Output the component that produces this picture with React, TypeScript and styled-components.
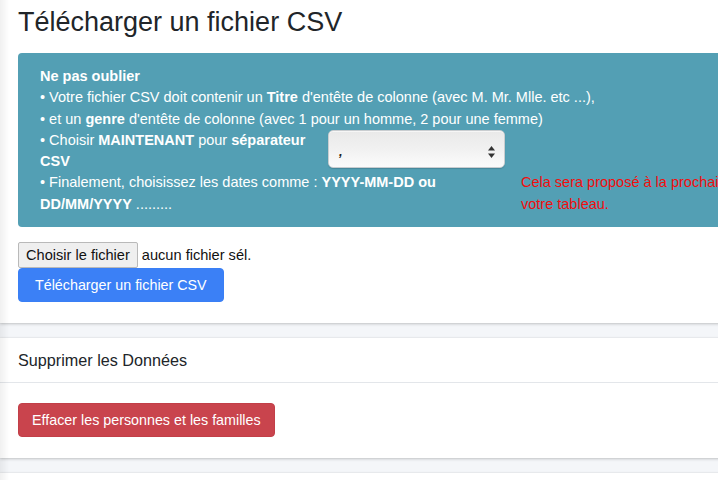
import React from "react";
import styled, { createGlobalStyle } from "styled-components";

const GlobalStyle = createGlobalStyle`
  html, body {
    margin: 0;
    padding: 0;
    background: #f4f6f9;
    overflow: hidden;
  }
  body {
    font-family: "Liberation Sans", Arial, Helvetica, sans-serif;
    color: #212529;
  }
  * { box-sizing: border-box; }
`;

const Page = styled.div`
  width: 780px;
  display: flex;
  flex-direction: column;
  gap: 15px;
`;

const SidebarShadow = styled.div`
  position: fixed;
  left: 0;
  top: 0;
  bottom: 0;
  width: 9px;
  background: linear-gradient(to right, rgba(0, 0, 0, 0.06), rgba(0, 0, 0, 0));
  pointer-events: none;
`;

const Card = styled.section`
  background: #fff;
  box-shadow: 0 0 1px rgba(0, 0, 0, 0.125), 0 1px 3px rgba(0, 0, 0, 0.2);
`;

const CardBody = styled.div<{ $top: number; $bottom: number }>`
  padding: ${(p) => p.$top}px 18px ${(p) => p.$bottom}px 18px;
  display: flex;
  flex-direction: column;
  align-items: flex-start;
`;

const CardHeader = styled.div`
  padding: 11px 18px 10px;
  font-size: 16.2px;
  line-height: 23px;
  border-bottom: 1px solid #e3e6ea;
`;

const Title = styled.h1`
  margin: 0 0 15px 0;
  font-size: 27px;
  line-height: 32px;
  font-weight: 400;
  color: #212529;
`;

const Alert = styled.div`
  align-self: stretch;
  background: #539fb4;
  color: #fff;
  border-radius: 4px;
  padding: 13px 20px 12px 22px;
  font-size: 14.5px;
  line-height: 21.3px;
`;

const Line = styled.div``;

const Strong = styled.b`
  font-weight: 700;
`;

const SplitRow = styled.div<{ $left: number; $gap: number }>`
  display: grid;
  grid-template-columns: ${(p) => p.$left}px auto;
  column-gap: ${(p) => p.$gap}px;
  align-items: start;
`;

const SelectBox = styled.div`
  width: 177px;
  height: 38px;
  border-radius: 5px;
  border: 1px solid #c9cdd0;
  background: linear-gradient(to bottom, #e9e9e9 0%, #f1f1f1 50%, #fbfbfb 100%);
  box-shadow: 0 1px 1px rgba(0, 0, 0, 0.15), inset 0 1px 0 rgba(255, 255, 255, 0.6);
  display: flex;
  align-items: center;
  justify-content: space-between;
  padding: 6px 8px 0 10px;
  color: #222;
  font-size: 13px;
`;

const SelectValue = styled.span`
  font-weight: 700;
  font-style: italic;
`;

const RedNote = styled.div`
  color: #f20d0d;
  width: 340px;
`;

const FileRow = styled.div`
  margin-top: 15px;
  display: flex;
  align-items: center;
  gap: 4px;
  font-size: 14.6px;
`;

const FileButton = styled.label`
  height: 26px;
  padding: 0 7px;
  display: flex;
  align-items: center;
  background: #efefef;
  border: 1px solid #b9b9b9;
  border-radius: 2px;
  color: #111;
  cursor: pointer;
`;

const HiddenInput = styled.input`
  display: none;
`;

const FileStatus = styled.span`
  color: #111;
`;

const Button = styled.button<{ $variant: "primary" | "danger"; $padX: number }>`
  font-family: inherit;
  font-size: 14.3px;
  line-height: 20px;
  height: 34px;
  padding: 6px ${(p) => p.$padX}px;
  border-radius: 4px;
  color: #fff;
  border: 1px solid ${(p) => (p.$variant === "primary" ? "#3a7ff5" : "#c23f48")};
  background: ${(p) => (p.$variant === "primary" ? "#3b80f6" : "#c9444d")};
  cursor: pointer;
`;

const Arrows = () => (
  <svg width="9" height="14" viewBox="0 0 9 14">
    <path d="M4.5 1 L8 5.5 L1 5.5 Z" fill="#333" />
    <path d="M4.5 13 L8 8.5 L1 8.5 Z" fill="#333" />
  </svg>
);

export default function App() {
  return (
    <>
      <GlobalStyle />
      <SidebarShadow />
      <Page>
        <Card>
          <CardBody $top={6} $bottom={21}>
            <Title>Télécharger un fichier CSV</Title>
            <Alert>
              <Line>
                <Strong>Ne pas oublier</Strong>
              </Line>
              <Line>
                • Votre fichier CSV doit contenir un <Strong>Titre</Strong> d'entête de colonne (avec M. Mr. Mlle. etc ...),
              </Line>
              <Line>
                • et un <Strong>genre</Strong> d'entête de colonne (avec 1 pour un homme, 2 pour une femme)
              </Line>
              <SplitRow $left={288} $gap={0}>
                <Line>
                  • Choisir <Strong>MAINTENANT</Strong> pour <Strong>séparateur CSV</Strong>
                </Line>
                <SelectBox>
                  <SelectValue>,</SelectValue>
                  <Arrows />
                </SelectBox>
              </SplitRow>
              <SplitRow $left={470} $gap={11}>
                <Line>
                  • Finalement, choisissez les dates comme : <Strong>YYYY-MM-DD ou DD/MM/YYYY</Strong> .........
                </Line>
                <RedNote>Cela sera proposé à la prochaine importation de votre tableau.</RedNote>
              </SplitRow>
            </Alert>
            <FileRow>
              <FileButton>
                Choisir le fichier
                <HiddenInput type="file" accept=".csv" />
              </FileButton>
              <FileStatus>aucun fichier sél.</FileStatus>
            </FileRow>
            <Button $variant="primary" $padX={16}>
              Télécharger un fichier CSV
            </Button>
          </CardBody>
        </Card>
        <Card>
          <CardHeader>Supprimer les Données</CardHeader>
          <CardBody $top={20} $bottom={21}>
            <Button $variant="danger" $padX={13}>
              Effacer les personnes et les familles
            </Button>
          </CardBody>
        </Card>
        <Card>
          <CardBody $top={40} $bottom={0} />
        </Card>
      </Page>
    </>
  );
}
